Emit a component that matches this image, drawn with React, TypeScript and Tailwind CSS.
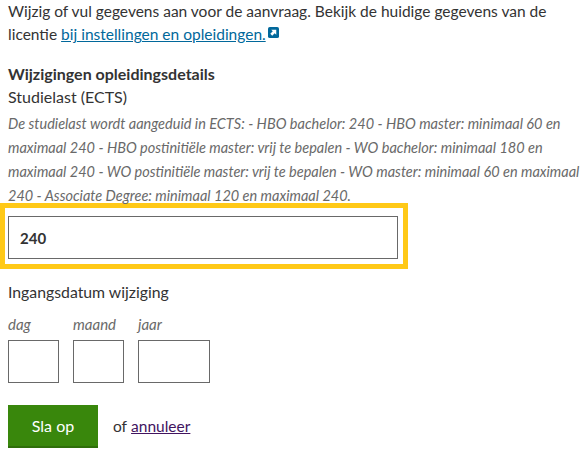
const font = "font-['Lato',sans-serif]"

function ExternalIcon() {
  return (
    <svg viewBox="0 0 12 12" className="inline-block w-[11px] h-[11px] ml-[2px] align-[2px]">
      <rect width="12" height="12" rx="2" fill="#01689b" />
      <path d="M3.5 3h5.5v5.5L7.3 6.8 4.6 9.5 2.5 7.4l2.7-2.7z" fill="#fff" />
    </svg>
  )
}

export default function App() {
  return (
    <div className={`${font} w-[582px] h-[456px] overflow-hidden bg-white text-[#333] pl-2`}>
      <p className="text-[15.5px] leading-[23px]">
        Wijzig of vul gegevens aan voor de aanvraag. Bekijk de huidige gegevens van de licentie{" "}
        <a className="text-[#01689b] underline">bij instellingen en opleidingen.</a>
        <ExternalIcon />
      </p>
      <h2 className="text-[16px] font-bold leading-[22px] mt-[17px]">Wijzigingen opleidingsdetails</h2>
      <div className="text-[16px] leading-[22px] mt-[1px]">Studielast (ECTS)</div>
      <p className="text-[14.5px] italic text-[#696969] leading-[24px] mt-[4px] w-[572px]">
        De studielast wordt aangeduid in ECTS: - HBO bachelor: 240 - HBO master: minimaal 60 en maximaal 240 - HBO postinitiële master: vrij te bepalen - WO bachelor: minimaal 180 en maximaal 240 - WO postinitiële master: vrij te bepalen - WO master: minimaal 60 en maximaal 240 - Associate Degree: minimaal 120 en maximaal 240.
      </p>
      <div className="-ml-2 w-[408px] h-[66px] border-[5px] border-[#ffc917] pl-[3px] pr-[5px] pt-[8px] pb-[5px] mt-[-5px]">
        <input
          readOnly
          value="240"
          className="w-full h-full border border-[#696969] px-[11px] text-[15px] font-bold text-[#333] outline-none"
        />
      </div>
      <div className="text-[15.8px] leading-[22px] mt-[12px]">Ingangsdatum wijziging</div>
      <div className="flex gap-[14px] mt-[11px]">
        <label className="flex flex-col">
          <span className="text-[15px] italic text-[#696969] leading-[20px] mb-[6px]">dag</span>
          <input readOnly className="w-[51px] h-[43px] border border-[#696969] outline-none" />
        </label>
        <label className="flex flex-col">
          <span className="text-[15px] italic text-[#696969] leading-[20px] mb-[6px]">maand</span>
          <input readOnly className="w-[51px] h-[43px] border border-[#696969] outline-none" />
        </label>
        <label className="flex flex-col">
          <span className="text-[15px] italic text-[#696969] leading-[20px] mb-[6px]">jaar</span>
          <input readOnly className="w-[72px] h-[43px] border border-[#696969] outline-none" />
        </label>
      </div>
      <div className="flex items-center mt-[22px]">
        <button className="w-[90px] h-[43px] bg-[#39870c] border-b-2 border-[#2f6f0a] text-white text-[16px]">Sla op</button>
        <span className="text-[15.5px] ml-[15px]">of</span>
        <a className="text-[15.5px] ml-[4px] text-[#42145f] underline">annuleer</a>
      </div>
    </div>
  )
}
